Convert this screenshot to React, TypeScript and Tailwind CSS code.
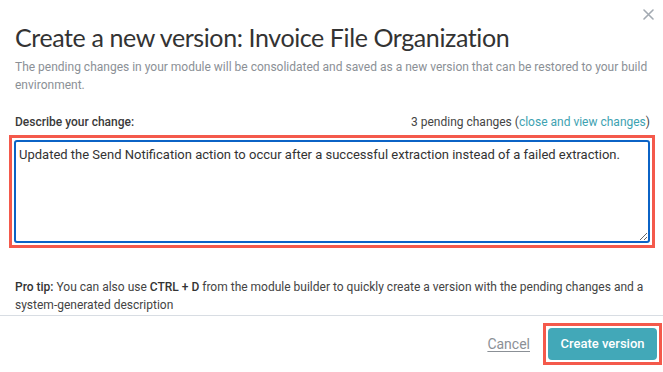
import { useState } from "react";

const CloseIcon = () => (
  <svg width="11" height="11" viewBox="0 0 11 11" fill="none">
    <path d="M1 1L10 10M10 1L1 10" stroke="#a3aab2" strokeWidth="1.6" strokeLinecap="round" />
  </svg>
);

const App = () => {
  const [text, setText] = useState(
    "Updated the Send Notification action to occur after a successful extraction instead of a failed extraction.",
  );

  return (
    <div className="relative w-[663px] h-[372px] bg-white font-['Roboto',sans-serif] overflow-hidden">
      <button className="absolute right-[9px] top-[9px] p-0">
        <CloseIcon />
      </button>

      <div className="pl-[15px] pr-[13px] pt-[21px]">
        <h1 className="font-['Lato',sans-serif] text-[25px] leading-[32px] tracking-[-0.4px] text-[#333333]">
          Create a new version: Invoice File Organization
        </h1>
        <p className="mt-[5px] text-[12px] leading-[18px] text-[#8b9096]">
          The pending changes in your module will be consolidated and saved as a new version that can be restored to your build
          environment.
        </p>

        <div className="mt-[19px] flex justify-between text-[12px] leading-[18px]">
          <span className="font-medium text-[#3a3a3a]">Describe your change:</span>
          <span className="text-[#444444]">
            3 pending changes (<a className="text-[#3ea2b1]">close and view changes</a>)
          </span>
        </div>

        <div className="mt-[4px] -ml-[6px] -mr-[5px] border-[3px] border-[#f4594b] p-[2px]">
          <textarea
            value={text}
            onChange={(e) => setText(e.target.value)}
            className="block w-full h-[103px] resize-y rounded-[3px] border-2 border-[#0b63c6] px-[3px] py-[4px] text-[13px] leading-[18px] text-[#333333] outline-none"
          />
        </div>

        <p className="mt-[30px] text-[12px] leading-[18px] text-[#444444]">
          <span className="font-medium text-[#333333]">Pro tip:</span> You can also use{" "}
          <span className="font-medium text-[#333333]">CTRL + D</span> from the module builder to quickly create a version
          with the pending changes and a system-generated description
        </p>
      </div>

      <div className="mt-[1px] border-t border-[#d8dde3]" />

      <div className="flex items-center justify-end pt-[7px] pr-[1px]">
        <a className="mr-[13px] text-[14px] text-[#8b9096] underline underline-offset-2">Cancel</a>
        <div className="border-[3px] border-[#f4594b] p-[2px]">
          <button className="w-[109px] h-[32px] rounded-[4px] bg-[#42a8b8] text-[13px] font-medium text-white">
            Create version
          </button>
        </div>
      </div>
    </div>
  );
};

export default App;
